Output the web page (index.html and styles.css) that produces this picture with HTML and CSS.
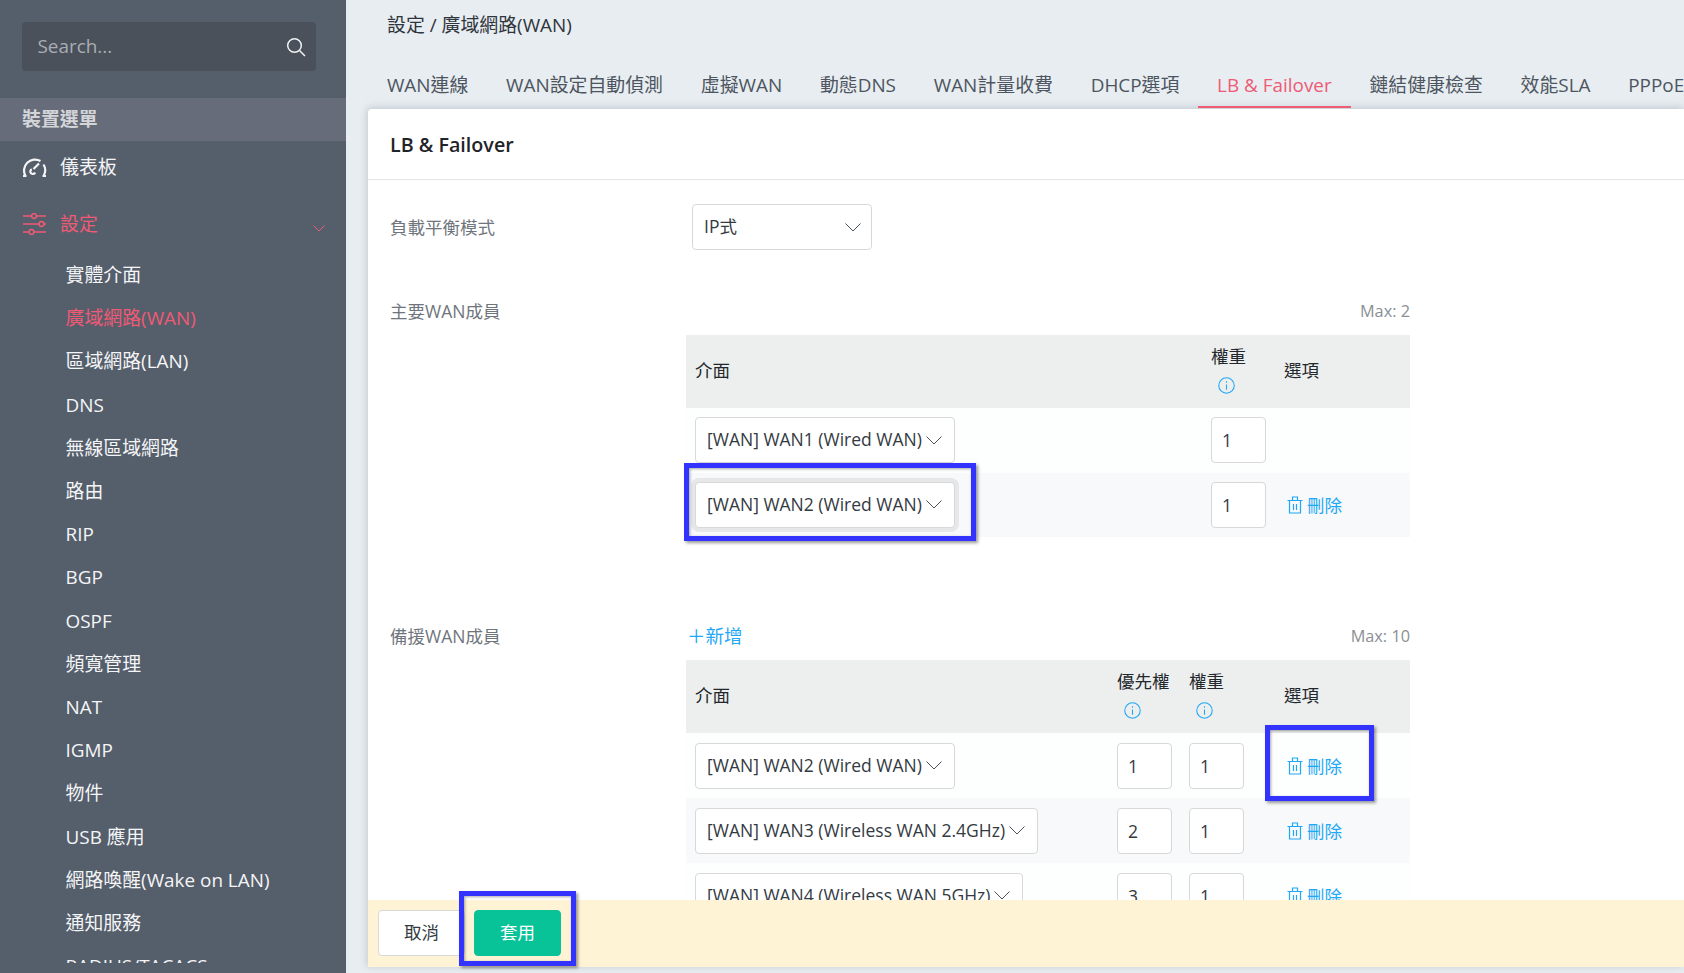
FILE: index.html
```html
<!DOCTYPE html>
<html lang="zh-Hant">
<head>
<meta charset="utf-8">
<title>LB &amp; Failover</title>
<link rel="stylesheet" href="styles.css">
</head>
<body>
<div class="app">
  <aside class="sidebar">
    <div class="search">
      <span class="search-text">Search...</span>
      <svg class="search-icon" viewBox="0 0 20 20"><circle cx="8.5" cy="8.5" r="6.8"/><path d="M13.5 13.5 19 19"/></svg>
    </div>
    <div class="side-head">裝置選單</div>
    <div class="side-item">
      <svg class="side-icon gauge" viewBox="0 0 25 19"><path d="M3.500 18A11 11 0 0 1 18.500 3M21.500 6.500A11 11 0 0 1 21.500 18M1 18h3.500M20.500 18H24"/><path d="M11.500 11 17 5.500M9.800 11.200a2.500 2.500 0 1 0 3.300 3.300"/></svg>
      <span>儀表板</span>
    </div>
    <div class="side-item active">
      <svg class="side-icon" viewBox="0 0 25 22"><path d="M1 3h8.500M14.500 3H24M1 11h16M22 11h2M1 19h6M12 19h12"/><circle cx="12" cy="3" r="2.400"/><circle cx="19.500" cy="11" r="2.400"/><circle cx="9.500" cy="19" r="2.400"/></svg>
      <span>設定</span>
      <svg class="side-caret" viewBox="0 0 12 7"><path d="M.5.5 6 6 11.500.5"/></svg>
    </div>
    <nav class="submenu">
      <a>實體介面</a>
      <a class="active">廣域網路(WAN)</a>
      <a>區域網路(LAN)</a>
      <a>DNS</a>
      <a>無線區域網路</a>
      <a>路由</a>
      <a>RIP</a>
      <a>BGP</a>
      <a>OSPF</a>
      <a>頻寬管理</a>
      <a>NAT</a>
      <a>IGMP</a>
      <a>物件</a>
      <a>USB 應用</a>
      <a>網路喚醒(Wake on LAN)</a>
      <a>通知服務</a>
      <a>RADIUS/TACACS</a>
    </nav>
  </aside>
  <main class="main">
    <div class="crumb">設定 / 廣域網路(WAN)</div>
    <div class="tabs">
      <a>WAN連線</a>
      <a>WAN設定自動偵測</a>
      <a>虛擬WAN</a>
      <a>動態DNS</a>
      <a>WAN計量收費</a>
      <a>DHCP選項</a>
      <a class="active">LB &amp; Failover</a>
      <a>鏈結健康檢查</a>
      <a>效能SLA</a>
      <a>PPPoE</a>
    </div>
    <section class="card">
      <h1 class="card-title">LB &amp; Failover</h1>
      <div class="card-body">
        <div class="mode-row">
          <div class="label">負載平衡模式</div>
          <div class="select mode-select"><span>IP式</span><svg class="chev" viewBox="0 0 16 9"><path d="M.5.5 8 8 15.500.5"/></svg></div>
        </div>

        <div class="member primary">
          <div class="member-head">
            <div class="label">主要WAN成員</div>
            <div class="max">Max: 2</div>
          </div>
          <div class="table t1">
            <div class="row head">
              <div class="cell first">介面</div>
              <div class="cell stack"><span>權重</span><svg class="info" viewBox="0 0 16 16"><circle cx="8" cy="8" r="7.300"/><path d="M8 7v5M8 4v1.500"/></svg></div>
              <div class="cell">選項</div>
            </div>
            <div class="row">
              <div class="cell first"><div class="select"><span>[WAN] WAN1 (Wired WAN)</span><svg class="chev" viewBox="0 0 16 9"><path d="M.5.5 8 8 15.500.5"/></svg></div></div>
              <div class="cell"><div class="num">1</div></div>
              <div class="cell"></div>
            </div>
            <div class="row even">
              <div class="cell first"><div class="select focus"><span>[WAN] WAN2 (Wired WAN)</span><svg class="chev" viewBox="0 0 16 9"><path d="M.5.5 8 8 15.500.5"/></svg><i class="mark mark-select"></i></div></div>
              <div class="cell"><div class="num">1</div></div>
              <div class="cell"><a class="del"><svg class="trash" viewBox="0 0 16 18"><path d="M.5 4.500h15M5.500 4.500V1h5v3.500M2.500 4.500V17h11V4.500M6.500 8v6M9.500 8v6"/></svg>刪除</a></div>
            </div>
          </div>
        </div>

        <div class="member backup">
          <div class="member-head">
            <div class="label">備援WAN成員</div>
            <a class="add">＋新增</a>
            <div class="max">Max: 10</div>
          </div>
          <div class="table t2">
            <div class="row head">
              <div class="cell first">介面</div>
              <div class="cell stack"><span>優先權</span><svg class="info" viewBox="0 0 16 16"><circle cx="8" cy="8" r="7.300"/><path d="M8 7v5M8 4v1.500"/></svg></div>
              <div class="cell stack"><span>權重</span><svg class="info" viewBox="0 0 16 16"><circle cx="8" cy="8" r="7.300"/><path d="M8 7v5M8 4v1.500"/></svg></div>
              <div class="cell">選項</div>
            </div>
            <div class="row">
              <div class="cell first"><div class="select"><span>[WAN] WAN2 (Wired WAN)</span><svg class="chev" viewBox="0 0 16 9"><path d="M.5.5 8 8 15.500.5"/></svg></div></div>
              <div class="cell"><div class="num">1</div></div>
              <div class="cell"><div class="num">1</div></div>
              <div class="cell"><a class="del"><svg class="trash" viewBox="0 0 16 18"><path d="M.5 4.500h15M5.500 4.500V1h5v3.500M2.500 4.500V17h11V4.500M6.500 8v6M9.500 8v6"/></svg>刪除</a><i class="mark mark-del"></i></div>
            </div>
            <div class="row even">
              <div class="cell first"><div class="select"><span>[WAN] WAN3 (Wireless WAN 2.4GHz)</span><svg class="chev" viewBox="0 0 16 9"><path d="M.5.5 8 8 15.500.5"/></svg></div></div>
              <div class="cell"><div class="num">2</div></div>
              <div class="cell"><div class="num">1</div></div>
              <div class="cell"><a class="del"><svg class="trash" viewBox="0 0 16 18"><path d="M.5 4.500h15M5.500 4.500V1h5v3.500M2.500 4.500V17h11V4.500M6.500 8v6M9.500 8v6"/></svg>刪除</a></div>
            </div>
            <div class="row">
              <div class="cell first"><div class="select"><span>[WAN] WAN4 (Wireless WAN 5GHz)</span><svg class="chev" viewBox="0 0 16 9"><path d="M.5.5 8 8 15.500.5"/></svg></div></div>
              <div class="cell"><div class="num">3</div></div>
              <div class="cell"><div class="num">1</div></div>
              <div class="cell"><a class="del"><svg class="trash" viewBox="0 0 16 18"><path d="M.5 4.500h15M5.500 4.500V1h5v3.500M2.500 4.500V17h11V4.500M6.500 8v6M9.500 8v6"/></svg>刪除</a></div>
            </div>
          </div>
        </div>
      </div>
      <footer class="card-foot">
        <button class="btn cancel">取消</button>
        <button class="btn apply">套用<i class="mark mark-apply"></i></button>
      </footer>
    </section>
  </main>
</div>
</body>
</html>
```
FILE: styles.css
```css
* { box-sizing: border-box; }
html, body { margin: 0; height: 100%; overflow: hidden; }
body {
  font-family: "Open Sans", "Noto Sans CJK TC", sans-serif;
  font-size: 17.500px;
  line-height: 24px;
  color: #333a42;
}
.app { display: flex; width: 1684px; height: 973px; overflow: hidden; }

/* Sidebar */
.sidebar {
  flex: 0 0 346px;
  height: 973px;
  background: #555e6b;
  color: #f4f5f6;
  padding-top: 22px;
  display: flex;
  flex-direction: column;
  font-size: 18.900px;
}
.search {
  margin: 0 30px 0 22px;
  height: 49px;
  background: #4a515b;
  border-radius: 4px;
  display: flex;
  align-items: center;
  justify-content: space-between;
  padding: 0 10px 0 15.500px;
  flex: none;
}
.search-text { color: #a9adb3; margin-bottom: 2px; }
.search-icon { width: 20px; height: 20px; fill: none; stroke: #f2f3f4; stroke-width: 1.500; }
.side-head {
  margin-top: 27px;
  height: 43px;
  flex: none;
  background: #666c79;
  display: flex;
  align-items: center;
  padding: 0 0 2px 22px;
  font-weight: 700;
  color: #d3d5d8;
}
.side-item {
  display: flex;
  align-items: center;
  padding-left: 22px;
  height: 50px;
  flex: none;
  gap: 13px;
  margin-top: 1px;
}
.side-item.active { color: #ef5a75; margin-top: 7px; }
.side-icon { width: 25px; height: 22px; fill: none; stroke: currentColor; stroke-width: 1.500; }
.side-icon.gauge { height: 19px; stroke-width: 2.200; }
.side-caret { width: 12px; height: 7px; fill: none; stroke: currentColor; stroke-width: 1; margin-left: auto; margin-right: 21px; margin-top: 8px; }
.submenu {
  display: flex;
  flex-direction: column;
  margin-top: 5px;
  padding-left: 65.500px;
  height: 708.500px;
  overflow: hidden;
  flex: none;
}
.submenu a { flex: 0 0 43.200px; line-height: 43.200px; white-space: nowrap; }
.submenu a.active { color: #ef5a75; }

/* Main */
.main {
  flex: 1;
  min-width: 0;
  height: 973px;
  background: #e8edf1;
  padding: 0 0 6px 22px;
  display: flex;
  flex-direction: column;
}
.crumb { flex: none; height: 50px; line-height: 50px; padding-left: 19px; color: #2f353c; font-size: 18.900px; }
.tabs {
  flex: none;
  display: flex;
  height: 59px;
  font-size: 18.900px;
  color: #4d5560;
  white-space: nowrap;
  position: relative;
  z-index: 1;
}
.tabs a { padding: 0 18.880px; height: 58px; line-height: 70px; flex: none; border-bottom: 2.500px solid transparent; }
.tabs a.active { color: #ef5a75; border-bottom-color: #ef5a75; }

.card {
  flex: 1;
  min-height: 0;
  background: #fff;
  border-radius: 4px 0 0 0;
  box-shadow: 0 -2px 8px rgba(90, 110, 130, .2), -2px 0 6px rgba(90, 110, 130, .1);
  display: flex;
  flex-direction: column;
  width: 1316px;
}
.card-title {
  flex: none;
  margin: 0;
  height: 71px;
  line-height: 71px;
  padding-left: 22px;
  font-size: 19.700px;
  font-weight: 600;
  color: #1f2429;
  border-bottom: 1px solid #e4e6e8;
}
.card-body { flex: 1; min-height: 0; overflow: hidden; padding: 24px 0 0 22px; }
.label { color: #6f757c; margin-bottom: 1px; }
.mode-row { display: flex; align-items: center; height: 46px; }
.mode-row .label { width: 302px; }
.select {
  display: inline-flex;
  align-items: center;
  height: 46px;
  padding: 0 12px 2px 11px;
  gap: 4px;
  background: #fff;
  border: 1px solid #d8d8d8;
  border-radius: 4px;
  color: #333a42;
  white-space: nowrap;
  position: relative;
}
.mode-select { width: 180px; justify-content: space-between; padding-right: 10px; }
.chev { width: 16px; height: 9px; fill: none; stroke: #4c5259; stroke-width: 1; flex: none; margin-top: 2px; }
.select.focus { box-shadow: 0 0 0 4px #e6e7e8; }

.member { width: 1020px; }
.primary { margin-top: 49px; }
.backup { margin-top: 87px; }
.member-head { display: flex; align-items: center; height: 24px; margin-bottom: 12px; }
.member-head .label { width: 296px; }
.max { margin-left: auto; color: #8a8f95; font-size: 16.300px; }
.add { color: #1fa8f5; margin-left: 1px; font-size: 18.500px; }

.table { margin-left: 296px; width: 724px; }
.row { display: grid; background: #fdfefe; }
.t1 .row { grid-template-columns: 525px 73px 1fr; height: 64.500px; }
.t2 .row { grid-template-columns: 431px 72px 95px 1fr; height: 65px; }
.row.even { background: #f8f9fb; }
.table .row.head { height: 73px; background: #edeeee; color: #23282d; padding-bottom: 3px; }
.cell { display: flex; align-items: center; position: relative; min-width: 0; }
.cell.first { padding-left: 9px; }
.stack { flex-direction: column; align-items: flex-start; justify-content: center; gap: 9px; padding-bottom: 3px; }
.info { width: 17px; height: 17px; fill: none; stroke: #1fa8f5; stroke-width: 1; margin-left: 7px; }
.num {
  width: 55px;
  height: 46px;
  background: #fff;
  border: 1px solid #d8d8d8;
  border-radius: 4px;
  padding-left: 10px;
  line-height: 44px;
  color: #333a42;
}
.del { color: #1fa8f5; display: inline-flex; align-items: center; gap: 4px; margin-left: 3px; }
.trash { width: 16px; height: 18px; fill: none; stroke: #1fa8f5; stroke-width: 1.200; }

.mark {
  position: absolute;
  border: 5px solid #3333ff;
  box-shadow: 2px 2px 3px rgba(0, 0, 0, .4), inset 1px 1px 3px rgba(0, 0, 0, .35);
  pointer-events: none;
  z-index: 5;
}
.mark-select { left: -12px; right: -22px; top: -20px; bottom: -14px; }
.mark-del { left: -19px; width: 109px; top: -8px; bottom: -3px; }
.mark-apply { left: -16px; right: -16px; top: -20px; bottom: -11px; }

.card-foot {
  flex: none;
  height: 67px;
  background: #fff3d6;
  display: flex;
  align-items: flex-start;
  padding: 10px 0 0 10px;
  gap: 9px;
  position: relative;
}
.btn {
  font: inherit;
  height: 46px;
  width: 87px;
  border-radius: 4px;
  border: 1px solid #d8d8d8;
  background: #fff;
  color: #333a42;
  position: relative;
  padding: 0 0 2px;
}
.btn.apply { background: #08c298; border-color: #08c298; color: #fff; }
```
